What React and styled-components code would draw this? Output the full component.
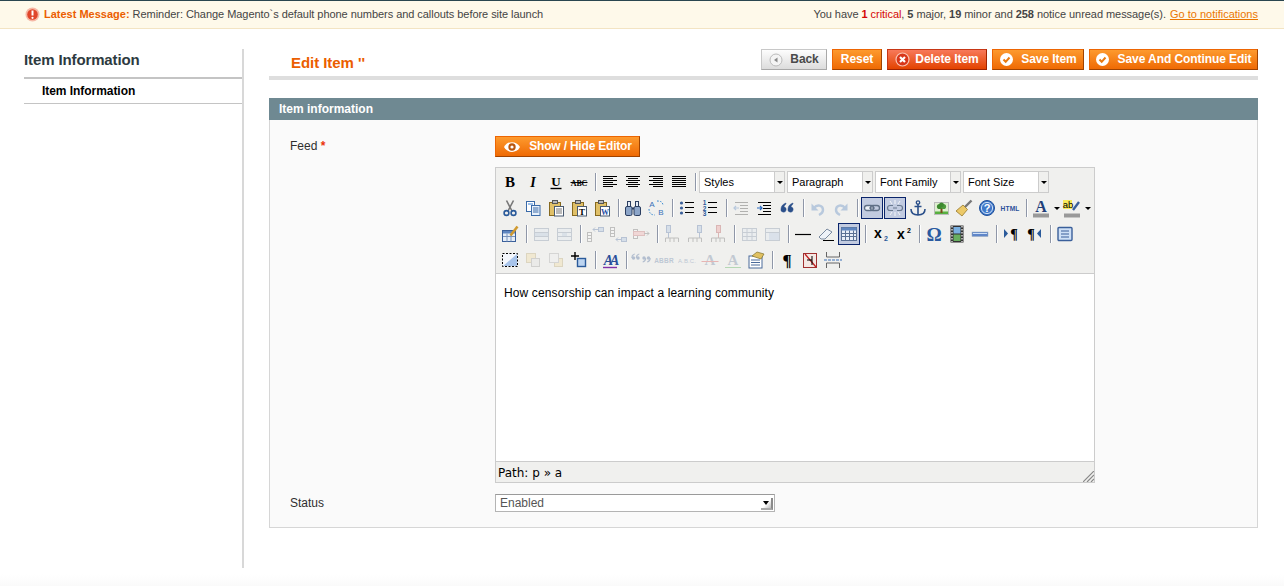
import React from 'react';
import styled, { createGlobalStyle, css } from 'styled-components';

const Global = createGlobalStyle`
  html, body { margin: 0; padding: 0; background: #fff; }
  body { font: 12px/1.3 "Liberation Sans", Arial, sans-serif; color: #2f2f2f; }
`;
const Page = styled.div`display:flex;flex-direction:column;height:586px;overflow:hidden;`;
const Notice = styled.div`
  height:27px;flex:none;display:flex;align-items:center;justify-content:space-between;
  padding:0 26px 0 25px;background:#fef9ea;border-top:1px solid #2a4650;border-bottom:1px solid #f3e4c3;
  font-size:11px;color:#444;letter-spacing:-.05px;
`;
const NoticeLeft = styled.div`display:flex;align-items:center;gap:4px;`;
const Latest = styled.b`color:#eb5e00;letter-spacing:0;`;
const Crit = styled.span`color:#d40707;`;
const GoLink = styled.a`color:#ea7601;text-decoration:underline;margin-left:1px;letter-spacing:0;`;
const Body = styled.div`flex:1;display:flex;padding:20px 26px 0 24px;min-height:0;`;
const Side = styled.aside`width:218px;flex:none;height:519px;border-right:2px solid #d8d8d8;`;
const SideTitle = styled.h3`
  margin:0;height:28px;border-bottom:2px solid #c4c4c4;
  font-size:15px;line-height:21px;font-weight:bold;color:#2d3a40;letter-spacing:-.12px;
`;
const SideItem = styled.div`
  height:24px;line-height:24px;padding-left:18px;font-weight:bold;color:#000;border-bottom:1px solid #c4c4c4;letter-spacing:-.05px;
`;
const Main = styled.main`flex:1;margin-left:25px;min-width:0;`;
const Head = styled.div`
  height:27px;display:flex;justify-content:space-between;border-bottom:4px solid #dedede;margin-bottom:18px;
`;
const Title = styled.h3`margin:4px 0 0 22px;font-size:15px;line-height:20px;color:#eb5e00;font-weight:bold;letter-spacing:-.05px;`;
const Actions = styled.div`display:flex;gap:5px;height:21px;`;
const Btn = styled.button`
  display:inline-flex;align-items:center;justify-content:center;gap:7px;box-sizing:border-box;height:21px;
  padding:0;white-space:nowrap;font:bold 12px/19px "Liberation Sans", Arial, sans-serif;color:#fff;cursor:pointer;
  letter-spacing:-.07px;
  border:1px solid;border-color:#ed6502 #a04300 #a04300 #ed6502;
  background:linear-gradient(#fd9a2e,#ef6a04);
  width:${p => p.$w}px;
  svg{flex:none;}
  ${p => p.$kind === 'back' && css`
    color:#4a4a4a;border-color:#c8c8c8 #a8a8a8 #a8a8a8 #c8c8c8;background:linear-gradient(#fdfdfd,#dcdcdc);
  `}
  ${p => p.$kind === 'delete' && css`
    gap:5px;border-color:#c73615 #a02300 #a02300 #c73615;background:linear-gradient(#f7795a,#e34300);
  `}
`;
const SectionHead = styled.div`
  height:22px;line-height:22px;padding-left:10px;background:#6f8992;color:#fff;font-weight:bold;
`;
const Panel = styled.div`
  box-sizing:border-box;height:408px;padding:16px 20px 15px 20px;background:#fafafa;
  border:1px solid #d6d6d6;border-top:none;
`;
const Row = styled.div`display:flex;`;
const Label = styled.div`width:205px;flex:none;line-height:19px;color:#2f2f2f;`;
const FeedLabel = styled(Label)`line-height:20px;`;
const Req = styled.b`color:#eb340a;`;
const Field = styled.div`width:600px;`;
const ShowBtn = styled(Btn)`gap:8px;margin-bottom:10px;letter-spacing:-.2px;`;
const Editor = styled.div`
  position:relative;box-sizing:border-box;width:600px;height:316px;display:flex;flex-direction:column;
  border:1px solid #ccc;background:#f0f0ee;
`;
const Toolbar = styled.div`
  box-sizing:border-box;height:106px;padding:3px 0 0 3px;display:flex;flex-direction:column;gap:4px;
  border-bottom:1px solid #ccc;
`;
const ToolRow = styled.div`display:flex;height:22px;`;
const ToolBtn = styled.span`
  box-sizing:border-box;width:22px;height:22px;margin-right:${p => (p.$split ? 0 : 1)}px;display:flex;align-items:center;justify-content:center;
  flex:none;border:1px solid transparent;
  ${p => p.$off && css`svg{opacity:.3;}`}
  ${p => p.$on && css`border-color:#0a246a;background:#c2cbe0;`}
`;
const SplitArrow = styled.span`
  width:9px;height:22px;flex:none;display:flex;align-items:center;justify-content:center;
  &::before{content:"";border:3px solid transparent;border-top:3px solid #000;border-bottom:none;}
`;
const Sep = styled.span`
  width:8px;flex:none;height:22px;display:flex;justify-content:center;align-items:center;
  &::before{content:"";width:1px;height:18px;background:#8f97a8;box-shadow:1px 0 0 #fff;}
`;
const Drop = styled.span`
  box-sizing:border-box;width:86px;height:22px;margin-right:2px;flex:none;display:flex;background:#fff;border:1px solid #ccc;
  font-size:11px;line-height:20px;color:#000;
`;
const DropLabel = styled.span`flex:1;padding-left:4px;`;
const DropArrow = styled.span`
  width:9px;background:#f0f0ee;border-left:1px solid #ccc;display:flex;align-items:center;justify-content:center;
  &::before{content:"";border:3px solid transparent;border-top:3px solid #000;border-bottom:none;}
`;
const Content = styled.div`
  flex:1;background:#fff;padding:10px 8px;font-size:12px;line-height:18px;color:#000;letter-spacing:.13px;
`;
const PathBar = styled.div`
  box-sizing:border-box;height:21px;padding-left:2px;border-top:1px solid #ccc;
  font:12px/22px "DejaVu Sans", Verdana, sans-serif;color:#000;
`;
const Grip = styled.svg`position:absolute;right:0;bottom:0;`;
const StatusRow = styled(Row)`margin-top:11px;`;
const Status = styled.div`
  box-sizing:border-box;width:280px;height:18px;display:flex;justify-content:space-between;background:#fff;
  border:1px solid #b4b4b4;border-top-color:#9a9a9a;padding-left:4px;line-height:16px;color:#555;
`;
const StatusArrow = styled.span`
  width:12px;height:12px;margin-top:3px;margin-right:1px;box-sizing:border-box;display:flex;align-items:center;justify-content:center;
  background:linear-gradient(135deg,#fff 55%,#bbb);border-right:2px solid #8a8a8a;border-bottom:2px solid #a8a8a8;
  &::before{content:"";border:3px solid transparent;border-top:4px solid #000;border-bottom:none;}
`;
const Footer = styled.div`height:18px;flex:none;background:linear-gradient(#fff 35%,#fafafa);`;

const Ic = ({ s = 20, v = 20, children }) => <svg width={s} height={s} viewBox={`0 0 ${v} ${v}`}>{children}</svg>;
const P = ({ d, c = '#000', w = 1, f = 'none', dash }) => <path d={d} stroke={c} strokeWidth={w} fill={f} strokeDasharray={dash} />;
const T = ({ x, y, s = 10, c = '#000', b = true, fam = 'Liberation Sans', i, children, ls }) => (
  <text x={x} y={y} fontSize={s} fill={c} fontWeight={b ? 'bold' : 'normal'} fontFamily={fam} fontStyle={i ? 'italic' : 'normal'} letterSpacing={ls} textAnchor="middle">{children}</text>
);
const lines = widths => widths.map(([x, w], i) => <P key={i} d={`M${x} ${4.5 + i * 2}h${w}`} />);
const clip = inner => (
  <Ic>
    <rect x="3.5" y="4.5" width="11" height="13" fill="#e0c068" stroke="#86691f" />
    <rect x="6.5" y="2.5" width="5" height="3" fill="#b8b8b8" stroke="#555" />
    <rect x="8.5" y="8.5" width="9" height="9.5" fill="#fff" stroke="#4a5a70" />
    {inner}
  </Ic>
);
const gridIc = extra => (
  <Ic>
    <rect x="3.5" y="4.5" width="14" height="12" fill="#dfe8f4" stroke="#6b7f9a" />
    <P d="M3.5 8.5h14M3.5 12.5h14" c="#6b7f9a" />
    {extra}
  </Ic>
);
const rowIc = flip => (
  <Ic>
    <rect x="2.5" y={flip ? 3.5 : 8.5} width="4" height="9" fill="#fff" stroke="#555" />
    <P d={flip ? 'M2.5 6.5h4M2.5 9.5h4' : 'M2.5 11.5h4M2.5 14.5h4'} c="#555" />
    <rect x="13.5" y={flip ? 13.5 : 3.5} width="5" height="4" fill="#9dbbe0" stroke="#3a5f9a" />
    <P d={flip ? 'M8 15.5h5M10 13.5l-2 2 2 2' : 'M8 5.5h5M10 3.5l-2 2 2 2'} c="#3a5f9a" />
  </Ic>
);
const colIc = (x, red) => (
  <Ic>
    <rect x={x} y="1.5" width="4" height="7" fill={red ? '#e88' : '#9dbbe0'} stroke={red ? '#a33' : '#3a5f9a'} />
    <P d={`M${x + 2} 9v5`} c={red ? '#a33' : '#3a5f9a'} />
    <P d="M3.5 18v-4h13v4M8 14v4M12 14v4" c="#555" />
  </Ic>
);
const quoteMark = (x, flip) => (
  <g key={x} transform={`translate(${x} 8)${flip ? ' rotate(180)' : ''}`}>
    <circle r="1.7" fill="#2a4f8a" />
    <path d="M-1.7 0c0-2 1-3.500 3-4" stroke="#2a4f8a" strokeWidth="1.100" fill="none" />
  </g>
);
const ICONS = {
  bold: <Ic><T x="10" y="15" s="15" fam="Liberation Serif">B</T></Ic>,
  italic: <Ic><T x="10" y="15" s="14" fam="Liberation Serif" i>I</T></Ic>,
  underline: <Ic><T x="10" y="14" s="13" fam="Liberation Serif">U</T><P d="M4.5 16.5h11" w="1.4" /></Ic>,
  strike: <Ic><T x="10" y="13.5" s="8" fam="Liberation Serif" ls="-.2">ABC</T><P d="M1.5 10.5h17" /></Ic>,
  left: <Ic>{lines([[3, 14], [3, 10], [3, 14], [3, 10], [3, 14], [3, 10]])}</Ic>,
  center: <Ic>{lines([[3, 14], [5, 10], [3, 14], [5, 10], [3, 14], [5, 10]])}</Ic>,
  right: <Ic>{lines([[3, 14], [7, 10], [3, 14], [7, 10], [3, 14], [7, 10]])}</Ic>,
  full: <Ic>{lines([[3, 14], [3, 14], [3, 14], [3, 14], [3, 14], [3, 14]])}</Ic>,
  cut: <Ic><P d="M6.5 2.5L12 13M13.5 2.5L8 13" c="#777" w="1.6" /><circle cx="6.5" cy="15" r="2.4" fill="none" stroke="#2a5a9a" strokeWidth="1.6" /><circle cx="13.5" cy="15" r="2.4" fill="none" stroke="#2a5a9a" strokeWidth="1.6" /></Ic>,
  copy: <Ic><rect x="3.5" y="3.5" width="8" height="10" fill="#fff" stroke="#3a6aa8" /><path d="M5 5h5v2H5z" fill="#9cc0ea" /><rect x="8.5" y="7.5" width="8.500" height="10" fill="#e8f1fb" stroke="#3a6aa8" /><P d="M10 10h5.500M10 12h5.500M10 14h5.500" c="#3a6aa8" /></Ic>,
  paste: clip(<P d="M10 11h6M10 13h6M10 15h6" c="#777" />),
  pastetext: clip(<T x="13" y="16.5" s="9" fam="Liberation Serif">T</T>),
  pasteword: clip(<T x="13" y="16.5" s="8" c="#1f4fa5" fam="Liberation Serif">W</T>),
  find: <Ic><rect x="2.5" y="8.5" width="6.500" height="9" rx="1.500" fill="#8ca5c8" stroke="#2b3e60" /><rect x="11" y="8.5" width="6.500" height="9" rx="1.500" fill="#8ca5c8" stroke="#2b3e60" /><rect x="4.5" y="3.5" width="3" height="5" fill="#e4ecf6" stroke="#2b3e60" /><rect x="12.5" y="3.5" width="3" height="5" fill="#e4ecf6" stroke="#2b3e60" /><P d="M9 10.5h2" c="#2b3e60" w="2" /></Ic>,
  replace: <Ic><T x="6" y="9" s="8" c="#3a70b8" b={false}>A</T><T x="15" y="17" s="8" c="#3a70b8" b={false}>B</T><P d="M3 11c0 4 2 6 6 6M11 3c4 0 6 1 6 5" c="#3a8ad0" dash="1.500 1.500" /></Ic>,
  bullets: <Ic><circle cx="4.5" cy="5" r="1.6" fill="#3a5f9a" /><circle cx="4.5" cy="10" r="1.6" fill="#3a5f9a" /><circle cx="4.5" cy="15" r="1.6" fill="#3a5f9a" /><P d="M8 4.5h9M8 9.5h9M8 14.5h9" /></Ic>,
  numlist: <Ic><T x="4.5" y="7" s="6.5" c="#2a5a9a">1</T><T x="4.5" y="12.5" s="6.5" c="#2a5a9a">2</T><T x="4.5" y="18" s="6.5" c="#2a5a9a">3</T><P d="M8 4.5h9M8 9.5h9M8 14.5h9" /></Ic>,
  outdent: <Ic><P d="M3 10h5M5 8l-2 2 2 2" c="#3a70b8" w="1.2" /><P d="M4 4.5h13M9 7.5h8M9 10.5h8M9 13.5h8M4 16.5h13" c="#222" /></Ic>,
  indent: <Ic><P d="M3 10h5M6 8l2 2-2 2" c="#2a6ac0" w="1.2" /><P d="M4 4.5h13M9 7.5h8M9 10.5h8M9 13.5h8M4 16.5h13" /></Ic>,
  quote: <Ic><P d="M9 5c-3 1-5 3-5 6a2.600 2.600 0 1 0 3-2c0-1 1-2 2-3z" c="#2a4f8a" f="#2a4f8a" w=".5" /><P d="M16 5c-3 1-5 3-5 6a2.600 2.600 0 1 0 3-2c0-1 1-2 2-3z" c="#2a4f8a" f="#2a4f8a" w=".5" /></Ic>,
  undo: <Ic><P d="M6 10c3-4 9-3 9 2 0 2-2 4-4 5" c="#3a70b8" w="2.4" /><P d="M3.5 5.5v7h7z" c="none" f="#3a70b8" /></Ic>,
  redo: <Ic><P d="M14 10c-3-4-9-3-9 2 0 2 2 4 4 5" c="#3a70b8" w="2.4" /><P d="M16.5 5.5v7h-7z" c="none" f="#3a70b8" /></Ic>,
  link: <Ic><rect x="2.5" y="7.5" width="9" height="5" rx="2.500" fill="#eef2f8" stroke="#5f6f86" strokeWidth="1.3" /><rect x="8.5" y="7.5" width="9" height="5" rx="2.500" fill="none" stroke="#5f6f86" strokeWidth="1.3" /><P d="M7 10h6" c="#5f6f86" /></Ic>,
  unlink: <Ic><P d="M8 7.5H5a2.500 2.500 0 0 0 0 5h3M12 7.5h3a2.500 2.500 0 0 1 0 5h-3M8 10h4" c="#6a7a90" w="1.2" /><P d="M10 2v4M10 14v4M5 3l2 3M15 3l-2 3M5 17l2-3M15 17l-2-3" c="#f4f6fa" /></Ic>,
  anchor: <Ic><circle cx="10" cy="4.5" r="1.7" fill="none" stroke="#2a4f8a" strokeWidth="1.3" /><P d="M10 6v11M6.5 8.5h7M3 11c0 4 3 6 7 6s7-2 7-6" c="#2a4f8a" w="1.6" /></Ic>,
  image: <Ic><rect x="3.5" y="4.5" width="14" height="12" fill="#dff0d0" stroke="#bbb" /><rect x="4" y="13.5" width="13" height="2.500" fill="#58b040" /><rect x="9.5" y="10" width="2" height="5" fill="#7a4a1a" /><circle cx="8.5" cy="8.5" r="2.6" fill="#3d8a2e" /><circle cx="12.5" cy="8.5" r="2.6" fill="#4c9a3a" /><circle cx="10.5" cy="6.8" r="2.4" fill="#3d8a2e" /></Ic>,
  cleanup: <Ic><P d="M17.5 2.5L11 9" c="#777" w="2.4" /><path d="M9 7l4.500 4.500-5.500 6.500-6-5z" fill="#ecc968" stroke="#97782a" strokeWidth=".8" /></Ic>,
  help: <Ic><circle cx="10" cy="10" r="7.5" fill="#3f78c8" stroke="#1f4f9a" /><circle cx="10" cy="10" r="5.6" fill="none" stroke="#cfe0f6" /><T x="10" y="14" s="11" c="#fff">?</T></Ic>,
  html: <Ic><T x="10" y="13" s="6.6" c="#2a4f9a" ls=".2">HTML</T></Ic>,
  fore: <Ic><T x="10" y="14" s="16" c="#1f3f7a" fam="Liberation Serif">A</T><rect x="2" y="15.5" width="16" height="4" fill="#999" /></Ic>,
  back: <Ic><rect x="1" y="2" width="9" height="9" fill="#f7ea5a" /><T x="6" y="10" s="9.5" b={false}>ab</T><P d="M17 4l-6 8" c="#3a5f9a" w="2.4" /><rect x="2" y="15.5" width="16" height="4" fill="#999" /></Ic>,
  tablectl: <Ic><rect x="2.5" y="6.5" width="13" height="11" fill="#e6eef8" stroke="#3a5f9a" /><rect x="3" y="7" width="12" height="2.500" fill="#5f86c0" /><P d="M3 12.5h12M7 9.5v8M11 9.5v8" c="#7a94bc" /><P d="M17.5 2.5l-7 9" c="#d09a30" w="2.6" /></Ic>,
  rowprops: gridIc(<rect x="4" y="9" width="13" height="3" fill="#aac0dc" />),
  cellprops: gridIc(<rect x="8" y="9" width="5" height="3" fill="#aac0dc" />),
  rowbefore: rowIc(false), rowafter: rowIc(true),
  rowdel: <Ic><rect x="2.5" y="5.5" width="4" height="9" fill="#fff" stroke="#555" /><rect x="2.5" y="7.5" width="11" height="4" fill="#f0a0a0" stroke="#b55" /><P d="M13 9.5h5M16 7.5l2 2-2 2" c="#555" /></Ic>,
  colbefore: colIc(4.5), colafter: colIc(12.5), coldel: colIc(8.5, true),
  split: <Ic><rect x="3.5" y="4.5" width="14" height="12" fill="#dfe8f4" stroke="#6b7f9a" /><P d="M3.5 8.5h14M3.5 12.5h14M8 4.5v12M13 4.5v12" c="#6b7f9a" /></Ic>,
  merge: <Ic><rect x="3.5" y="4.5" width="14" height="12" fill="#dfe8f4" stroke="#6b7f9a" /><rect x="7" y="8" width="10" height="8" fill="#aac0e4" /><P d="M3.5 8.5h14" c="#6b7f9a" /></Ic>,
  hr: <Ic><P d="M2 10.5h16" w="1.2" /></Ic>,
  eraser: <Ic><path d="M3 13l8-8 5 3-7 7H5z" fill="#eef2f8" stroke="#7a8aa0" /><P d="M7 16.5h11" /></Ic>,
  visual: <Ic><rect x="2.5" y="3.5" width="15" height="13" fill="#e8eef8" stroke="#5a7094" /><rect x="2.5" y="3.5" width="15" height="3" fill="#5f86c0" /><P d="M2.5 9.5h15M2.5 12.5h15M6.5 6.5v10M10.5 6.5v10M14.5 6.5v10" c="#5a7094" /></Ic>,
  sub: <Ic><T x="8" y="14" s="14">x</T><T x="16" y="17" s="7" c="#2a5a9a">2</T></Ic>,
  sup: <Ic><T x="8" y="15" s="14">x</T><T x="16" y="9" s="7">2</T></Ic>,
  omega: <Ic><T x="10" y="16.5" s="19" c="#2a5aa0" fam="Liberation Serif">Ω</T></Ic>,
  media: <Ic><rect x="3.5" y="1.5" width="13" height="17" fill="#333" /><rect x="6.5" y="3" width="7" height="6.500" fill="#7ab0e0" /><rect x="6.5" y="10.5" width="7" height="6.500" fill="#68b060" /><P d="M5 2v16M15 2v16" c="#ddd" w="1.4" dash="1.500 1.500" /></Ic>,
  nbsp: <Ic><rect x="2" y="8" width="16" height="4.500" fill="#5f86c8" stroke="#9ab" strokeWidth=".5" /><path d="M3 9h14v1H3z" fill="#cfe0f6" /></Ic>,
  ltr: <Ic><path d="M3 5v9l4-4.500z" fill="#2a5a9a" /><T x="13" y="15" s="14" fam="Liberation Serif">¶</T></Ic>,
  rtl: <Ic><path d="M17 5v9l-4-4.500z" fill="#2a5a9a" /><T x="7" y="15" s="14" fam="Liberation Serif">¶</T></Ic>,
  fullscreen: <Ic><rect x="3" y="3.5" width="14" height="13" rx="1" fill="#cfe0f6" stroke="#3a5f9a" strokeWidth="1.4" /><P d="M6 7h8M6 10h8M6 13h8" c="#3a5f9a" /></Ic>,
  layer: <Ic><rect x="2.5" y="3.5" width="15" height="13" fill="#f4f7fc" stroke="#000" strokeDasharray="2 1.500" /><path d="M3 16L17 4v12z" fill="#a8c4ea" /></Ic>,
  forward: <Ic><rect x="3.5" y="3.5" width="9" height="9" fill="#f0d890" stroke="#b09a5a" /><rect x="8.5" y="8.5" width="8" height="8" fill="#ddd" stroke="#888" /></Ic>,
  backward: <Ic><rect x="8.5" y="8.5" width="8" height="8" fill="#f0d890" stroke="#b09a5a" /><rect x="3.5" y="3.5" width="9" height="9" fill="#eee" stroke="#999" /></Ic>,
  absolute: <Ic><P d="M6 2v8M2 6h8" w="1.4" /><rect x="8.5" y="8.5" width="8" height="8" fill="#bcd4f0" stroke="#2a5a9a" strokeWidth="1.4" /></Ic>,
  style: <Ic><T x="10" y="15" s="14" c="#2a4f9a" i fam="Liberation Serif" ls="-3">AA</T><P d="M3 17.5h14" c="#8030a8" w="1.4" /></Ic>,
  cite: <Ic>{quoteMark(2.5)}{quoteMark(7)}{quoteMark(13, true)}{quoteMark(17.5, true)}</Ic>,
  abbr: <Ic><T x="10" y="13" s="6.5" c="#4a6a9a" ls=".2">ABBR</T></Ic>,
  acronym: <Ic><T x="10" y="13" s="6" c="#4a6a9a" b={false} ls=".1">A.B.C.</T></Ic>,
  del: <Ic><T x="10" y="15" s="15" c="#5a7094" fam="Liberation Serif">A</T><P d="M1.5 11.5h17" c="#d03030" /></Ic>,
  ins: <Ic><T x="10" y="15" s="15" c="#5a7094" fam="Liberation Serif">A</T><P d="M2 17.5h16" c="#30a030" /></Ic>,
  attribs: <Ic><rect x="3" y="6" width="13" height="12" fill="#fff" stroke="#4a6a9a" /><P d="M5 10h9M5 12.5h9M5 15h9" c="#4a6a9a" /><path d="M6 6l5-4 7 2-3 5z" fill="#e0c060" stroke="#80702a" strokeWidth=".7" /></Ic>,
  pilcrow: <Ic><T x="10" y="16" s="17" fam="Liberation Serif">¶</T></Ic>,
  nonbreak: <Ic><rect x="3.5" y="3.5" width="13" height="14" fill="#f5e8e4" stroke="#a03030" /><P d="M5 4l11 13" c="#c02020" w="1.3" /><P d="M12 6v9M7 10h5" /></Ic>,
  pagebreak: <Ic><P d="M3.5 2v5h13V2M3.5 18v-5h13v5" c="#666" /><P d="M1 10h18" c="#3a70b8" dash="3 1" /></Ic>,
};

const SELECTS = ['Styles', 'Paragraph', 'Font Family', 'Font Size'];
const TOOLBAR = [
  ['bold', 'italic', 'underline', 'strike', '|', 'left', 'center', 'right', 'full', '|', ...SELECTS.map(s => `@${s}`)],
  ['cut', 'copy', 'paste', 'pastetext', 'pasteword', '|', 'find', 'replace', '|', 'bullets', 'numlist', '|', 'outdent', 'indent', 'quote', '|', 'undo', 'redo', '|', 'link', 'unlink', 'anchor', 'image', 'cleanup', 'help', 'html', '|', 'fore>', 'back>'],
  ['tablectl', '|', 'rowprops', 'cellprops', '|', 'rowbefore', 'rowafter', 'rowdel', '|', 'colbefore', 'colafter', 'coldel', '|', 'split', 'merge', '|', 'hr', 'eraser', 'visual', '|', 'sub', 'sup', '|', 'omega', 'media', 'nbsp', '|', 'ltr', 'rtl', '|', 'fullscreen'],
  ['layer', 'forward', 'backward', 'absolute', '|', 'style', '|', 'cite', 'abbr', 'acronym', 'del', 'ins', 'attribs', '|', 'pilcrow', 'nonbreak', 'pagebreak'],
];
const OFF = new Set(['outdent', 'undo', 'redo', 'rowprops', 'cellprops', 'rowbefore', 'rowafter', 'rowdel', 'colbefore', 'colafter', 'coldel', 'split', 'merge', 'forward', 'backward', 'cite', 'abbr', 'acronym', 'del', 'ins']);
const ON = new Set(['link', 'unlink', 'visual']);

const Tool = ({ item }) => {
  if (item === '|') return <Sep />;
  if (item[0] === '@') return <Drop><DropLabel>{item.slice(1)}</DropLabel><DropArrow /></Drop>;
  if (item.endsWith('>')) {
    const name = item.slice(0, -1);
    return <><ToolBtn $split>{ICONS[name]}</ToolBtn><SplitArrow /></>;
  }
  return <ToolBtn $off={OFF.has(item)} $on={ON.has(item)}>{ICONS[item]}</ToolBtn>;
};

const Check = () => (
  <svg width="15" height="15" viewBox="0 0 15 15"><circle cx="7.5" cy="7.5" r="6.5" fill="#fff" /><path d="M4.5 7.5l2.200 2.300 3.800-4.300" stroke="#e87a10" strokeWidth="2" fill="none" /></svg>
);

export default function App() {
  return (
    <Page>
      <Global />
      <Notice>
        <NoticeLeft>
          <svg width="15" height="15" viewBox="0 0 15 15"><circle cx="7.5" cy="7.5" r="7" fill="#f6b8a6" /><circle cx="7.5" cy="7.5" r="5.3" fill="#e0452a" /><path d="M7.5 3.5v5" stroke="#fff" strokeWidth="2" /><circle cx="7.5" cy="10.8" r="1.1" fill="#fff" /></svg>
          <span><Latest>Latest Message:</Latest> Reminder: Change Magento`s default phone numbers and callouts before site launch</span>
        </NoticeLeft>
        <div>
          You have <Crit><b>1</b> critical</Crit>, <b>5</b> major, <b>19</b> minor and <b>258</b> notice unread message(s). <GoLink>Go to notifications</GoLink>
        </div>
      </Notice>
      <Body>
        <Side>
          <SideTitle>Item Information</SideTitle>
          <SideItem>Item Information</SideItem>
        </Side>
        <Main>
          <Head>
            <Title>Edit Item ''</Title>
            <Actions>
              <Btn $kind="back" $w={66}>
                <svg width="14" height="14" viewBox="0 0 14 14"><circle cx="7" cy="7" r="6" fill="#f4f4f4" stroke="#bbb" /><path d="M8.5 4.5v5L5 7z" fill="#888" /></svg>
                Back
              </Btn>
              <Btn $w={50}>Reset</Btn>
              <Btn $kind="delete" $w={100}>
                <svg width="15" height="15" viewBox="0 0 15 15"><circle cx="7.5" cy="7.5" r="6.500" fill="#d8361a" stroke="#f9c4b4" strokeWidth="1.2" /><path d="M5 5l5 5M10 5l-5 5" stroke="#fff" strokeWidth="2.2" /></svg>
                Delete Item
              </Btn>
              <Btn $w={92}><Check />Save Item</Btn>
              <Btn $w={169}><Check />Save And Continue Edit</Btn>
            </Actions>
          </Head>
          <SectionHead>Item information</SectionHead>
          <Panel>
            <Row>
              <FeedLabel>Feed <Req>*</Req></FeedLabel>
              <Field>
                <ShowBtn $w={145}>
                  <svg width="18" height="12" viewBox="0 0 18 12"><path d="M1 6c3.500-6.500 12.500-6.500 16 0-3.500 6.500-12.500 6.500-16 0z" fill="#fff" /><circle cx="9" cy="6" r="3.7" fill="#b9560f" /><circle cx="9" cy="6" r="1.6" fill="#fff" /></svg>
                  Show / Hide Editor
                </ShowBtn>
                <Editor>
                  <Toolbar>
                    {TOOLBAR.map((row, i) => (
                      <ToolRow key={i}>{row.map((it, j) => <Tool key={j} item={it} />)}</ToolRow>
                    ))}
                  </Toolbar>
                  <Content>How censorship can impact a learning community</Content>
                  <PathBar>Path: p » a</PathBar>
                  <Grip width="11" height="11" viewBox="0 0 11 11"><path d="M0 11L11 0M4 11l7-7M8 11l3-3" stroke="#888" strokeWidth="1.2" fill="none" /></Grip>
                </Editor>
              </Field>
            </Row>
            <StatusRow>
              <Label>Status</Label>
              <Status>Enabled<StatusArrow /></Status>
            </StatusRow>
          </Panel>
        </Main>
      </Body>
      <Footer />
    </Page>
  );
}
